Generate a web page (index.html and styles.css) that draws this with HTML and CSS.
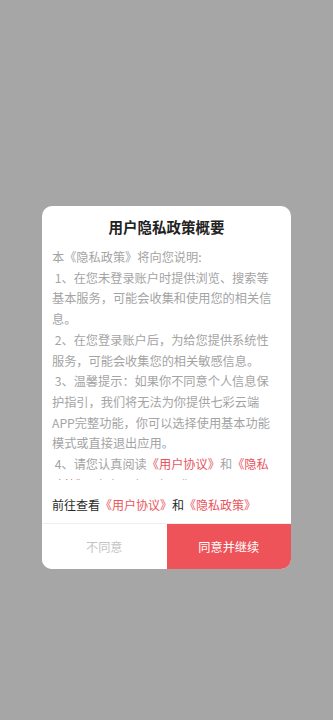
FILE: index.html
```html
<!DOCTYPE html>
<html lang="zh-CN">
<head>
<meta charset="utf-8">
<meta name="viewport" content="width=device-width, initial-scale=1">
<title>用户隐私政策概要</title>
<link rel="stylesheet" href="styles.css">
</head>
<body>
<div class="page">
  <div class="dialog">
    <h2 class="title">用户隐私政策概要</h2>
    <div class="content">
      <p>本《隐私政策》将向您说明:</p>
      <p>&nbsp;1、在您未登录账户时提供浏览、搜索等基本服务，可能会收集和使用您的相关信息。</p>
      <p>&nbsp;2、在您登录账户后，为给您提供系统性服务，可能会收集您的相关敏感信息。</p>
      <p>&nbsp;3、温馨提示：如果你不同意个人信息保护指引，我们将无法为你提供七彩云端APP完整功能，你可以选择使用基本功能模式或直接退出应用。</p>
      <p>&nbsp;4、请您认真阅读<span class="link">《用户协议》</span>和<span class="link">《隐私政策》</span>，点击同意即表示您</p>
    </div>
    <p class="notice">前往查看<span class="link">《用户协议》</span>和<span class="link">《隐私政策》</span></p>
    <div class="actions">
      <button class="btn btn-cancel" type="button">不同意</button>
      <button class="btn btn-ok" type="button">同意并继续</button>
    </div>
  </div>
</div>
</body>
</html>
```

FILE: styles.css
```css
* {
  box-sizing: border-box;
}

html, body {
  margin: 0;
  padding: 0;
}

body {
  font-family: "Noto Sans CJK SC", "Noto Sans", sans-serif;
  background: #a6a6a6;
}

.page {
  width: 333px;
  height: 720px;
  background: #a6a6a6;
  padding-top: 206px;
  display: flex;
  flex-direction: column;
  align-items: center;
}

.dialog {
  width: 249px;
  background: #ffffff;
  border-radius: 10px;
  overflow: hidden;
  display: flex;
  flex-direction: column;
}

.title {
  margin: 0;
  padding-top: 11px;
  font-size: 14.5px;
  line-height: 20px;
  font-weight: 700;
  color: #222222;
  text-align: center;
}

.content {
  margin-top: 10px;
  height: 233px;
  overflow: hidden;
  padding: 0 14px 0 10px;
  font-size: 12.2px;
  line-height: 20.7px;
  color: #a4a4a4;
}

.content p {
  margin: 0;
}

.link {
  color: #e9545d;
}

.notice {
  margin: 15px 0 8px;
  padding: 0 10px;
  font-size: 12px;
  line-height: 20px;
  color: #2a2a2a;
}

.actions {
  display: flex;
  border-top: 1px solid #efefef;
  height: 46px;
}

.btn {
  flex: 1;
  border: 0;
  margin: 0;
  padding: 0;
  font-family: inherit;
  font-size: 12.2px;
  height: 45px;
}

.btn-cancel {
  background: #ffffff;
  color: #c4c4c4;
}

.btn-ok {
  background: #ee5359;
  color: #ffffff;
}
```
